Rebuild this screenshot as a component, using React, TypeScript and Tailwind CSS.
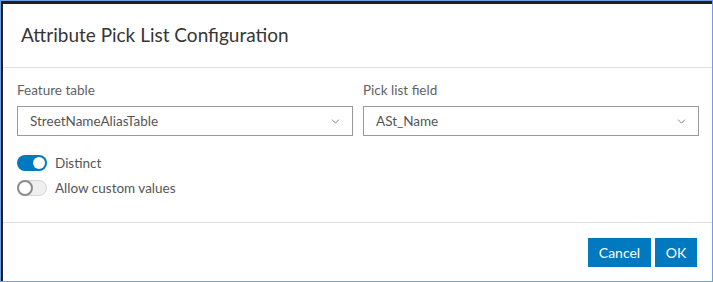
import { ChevronDown } from 'lucide-react';

type SelectProps = { label: string; value: string };

const SelectField = ({ label, value }: SelectProps) => (
  <div className="flex flex-col">
    <div className="h-[20px] leading-[20px] text-[13.5px] text-[#626262] mb-[6px]">{label}</div>
    <div className="h-[30px] border border-[#9a9a9a] flex items-center justify-between pl-[12px] pr-[10px] bg-white">
      <span className="text-[13.5px] text-[#555555]">{value}</span>
      <ChevronDown size={13} strokeWidth={1.5} className="text-[#6b6b6b]" />
    </div>
  </div>
);

const Toggle = ({ on, label }: { on: boolean; label: string }) => (
  <div className="h-[20px] flex items-center gap-[8px]">
    {on ? (
      <div className="w-[30px] h-[16px] rounded-full bg-[#0079c1] flex items-center justify-end pr-[2px]">
        <div className="w-[12px] h-[12px] rounded-full bg-white" />
      </div>
    ) : (
      <div className="w-[30px] h-[16px] rounded-full bg-[#efefef] border border-[#d4d4d4] flex items-center">
        <div className="w-[16px] h-[16px] -ml-[1px] rounded-full bg-white border-2 border-[#8c8c8c]" />
      </div>
    )}
    <span className="text-[13.5px] text-[#555555]">{label}</span>
  </div>
);

const App = () => {
  return (
    <div className="w-[713px] h-[282px] border border-[#6f9ee6] bg-white flex flex-col font-['Lato',sans-serif]">
      <div className="flex-1 flex flex-col border-t-[3px] border-l-2 border-[#1f1f1f]">
        <div className="h-[64px] flex items-center pl-[18px] border-b border-[#e0e0e0]">
          <h1 className="text-[19px] text-[#363636]">Attribute Pick List Configuration</h1>
        </div>

        <div className="h-[155px] pt-[12px] pl-[14px] pr-[13px] border-b border-[#e0e0e0]">
          <div className="grid grid-cols-2 gap-[10px]">
            <SelectField label="Feature table" value="StreetNameAliasTable" />
            <SelectField label="Pick list field" value="ASt_Name" />
          </div>
          <div className="flex flex-col gap-[5px] mt-[17px]">
            <Toggle on label="Distinct" />
            <Toggle on={false} label="Allow custom values" />
          </div>
        </div>

        <div className="flex-1 flex justify-end items-start gap-[4px] pt-[15px] pr-[15px]">
          <button type="button" className="h-[29px] w-[63px] bg-[#0079c1] text-white text-[14px]">
            Cancel
          </button>
          <button type="button" className="h-[29px] w-[42px] bg-[#0079c1] text-white text-[14px]">
            OK
          </button>
        </div>
      </div>
    </div>
  );
};

export default App;
